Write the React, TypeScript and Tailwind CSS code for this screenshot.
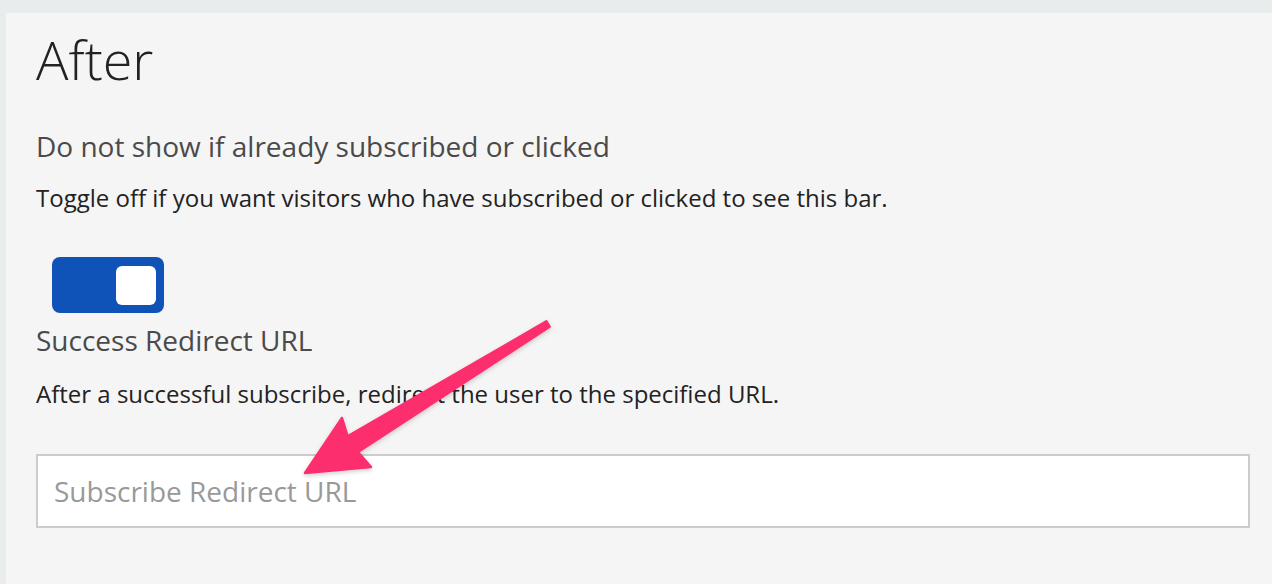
import React from 'react';

const Arrow: React.FC = () => (
  <svg className="absolute left-0 top-0 pointer-events-none" width="1272" height="584" viewBox="0 0 1272 584">
    <defs>
      <filter id="arrowShadow" x="-10%" y="-10%" width="120%" height="120%">
        <feDropShadow dx="0" dy="2" stdDeviation="2" floodColor="#000" floodOpacity="0.18" />
      </filter>
    </defs>
    <path
      d="M546.4 321.4 L347.6 436.4 L342 418 L305 473 L371 467 L358 452 L549.6 326.6 Z"
      fill="#fd2e6d"
      stroke="#fd2e6d"
      strokeWidth="2.5"
      strokeLinejoin="round"
      filter="url(#arrowShadow)"
    />
  </svg>
);

const Toggle: React.FC<{ on: boolean }> = ({ on }) => (
  <button
    className={`flex items-center w-[112px] h-[56px] rounded-[8px] px-[8px] ${on ? 'bg-[#1053b8] justify-end' : 'bg-[#ccc] justify-start'}`}
  >
    <span className="block w-[40px] h-[39px] rounded-[6px] bg-white" />
  </button>
);

export default function App() {
  return (
    <div className="relative h-[584px] bg-[#e9eced] pt-[13px] pl-[6px] overflow-hidden" style={{ fontFamily: '"Open Sans", sans-serif' }}>
      <div className="h-full bg-[#f5f5f5] pl-[30px] pr-[22px]">
        <h1 className="pt-[16px] text-[54px] leading-[60px] font-light text-[#222]">After</h1>

        <h2 className="mt-[39px] text-[28px] leading-[36px] text-[#4a4a4a]">Do not show if already subscribed or clicked</h2>
        <p className="mt-[18px] text-[24px] leading-[32px] text-[#222]">
          Toggle off if you want visitors who have subscribed or clicked to see this bar.
        </p>

        <div className="mt-[43px] ml-[16px]">
          <Toggle on />
        </div>

        <h2 className="mt-[9px] text-[28px] leading-[36px] text-[#4a4a4a]">Success Redirect URL</h2>
        <p className="mt-[20px] text-[24px] leading-[32px] text-[#222]">
          After a successful subscribe, redirect the user to the specified URL.
        </p>

        <input
          type="text"
          placeholder="Subscribe Redirect URL"
          className="mt-[44px] block w-full h-[74px] bg-white border-2 border-[#cccccc] px-[16px] text-[28px] text-[#333] placeholder:text-[#999] outline-none"
        />
      </div>
      <Arrow />
    </div>
  );
}
